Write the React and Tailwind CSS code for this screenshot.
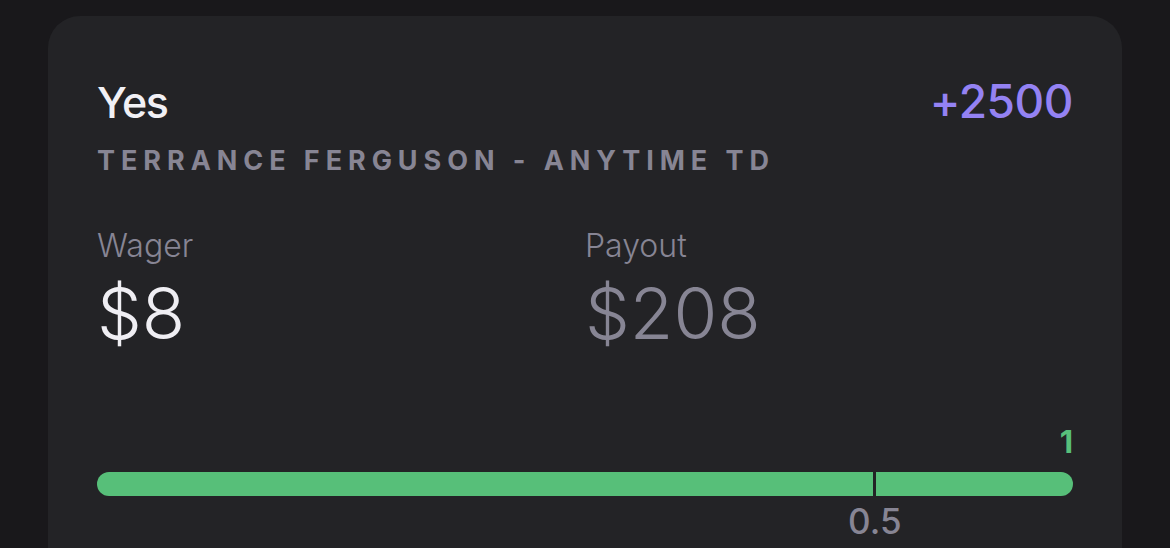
import React from 'react'

export default function App() {
  const sans = { fontFamily: 'Inter, "Noto Sans", sans-serif' }
  const marker = 0.797

  return (
    <div className="h-[548px] w-full bg-[#19181b] pt-[16px] px-[48px] overflow-hidden" style={sans}>
      <div className="rounded-[32px] bg-[#232326] px-[49px] pt-[62px] pb-[40px] h-[600px]">
        <div className="flex items-baseline justify-between">
          <div className="text-[43px] leading-none font-medium tracking-[-0.03em] text-[#f1f0f5]">Yes</div>
          <div className="text-[46px] leading-none font-medium tracking-[-0.01em] text-[#9482f3]">+2500</div>
        </div>
        <div className="mt-[23px] text-[27px] leading-none font-bold tracking-[0.22em] text-[#878594] whitespace-nowrap">
          TERRANCE FERGUSON - ANYTIME TD
        </div>

        <div className="mt-[56px] grid grid-cols-2">
          <div>
            <div className="text-[32px] leading-none font-light text-[#878594]">Wager</div>
            <div className="mt-[16px] text-[71px] leading-none font-light text-[#efeef3]">$8</div>
          </div>
          <div>
            <div className="text-[32px] leading-none font-light text-[#878594]">Payout</div>
            <div className="mt-[16px] text-[71px] leading-none font-light text-[#878594]">$208</div>
          </div>
        </div>

        <div className="mt-[77px] flex justify-end">
          <div className="text-[31px] leading-none font-bold text-[#58c07b]">1</div>
        </div>
        <div className="relative mt-[15px] h-[24px] rounded-full bg-[#57bf79]">
          <div className="absolute top-0 bottom-0 w-[3px] bg-[#232326]" style={{ left: `calc(${marker * 100}% - 1.5px)` }} />
        </div>
        <div className="relative h-[50px]">
          <div className="absolute top-[8px] -translate-x-1/2 text-[35px] leading-none font-medium text-[#878594]" style={{ left: `${marker * 100}%` }}>
            0.5
          </div>
        </div>
      </div>
    </div>
  )
}
